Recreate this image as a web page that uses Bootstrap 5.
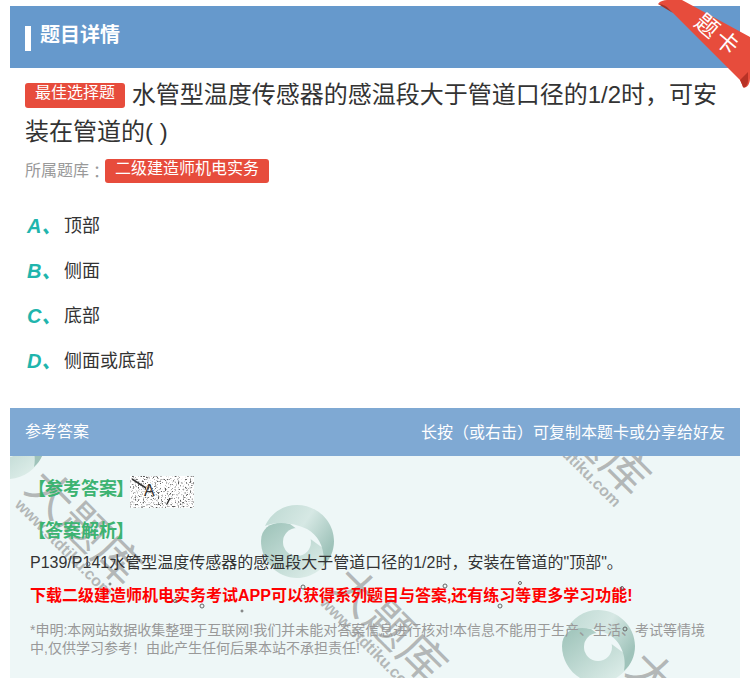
<!DOCTYPE html>
<html lang="zh-CN">
<head>
<meta charset="utf-8">
<link rel="stylesheet" href="https://cdn.jsdelivr.net/npm/bootstrap@5.3.0/dist/css/bootstrap.min.css">
<style>
html,body{height:678px;overflow:hidden;background:#fff}
body{font-family:"Liberation Sans","Noto Sans CJK SC",sans-serif;color:#333;padding:6px 10px 0}
.pc{font-family:"Noto Sans CJK TC",sans-serif}
.hd-bar{height:62px;background:#6699cc;color:#fff;padding-left:15px;padding-bottom:4px;font-size:20px;font-weight:700;position:relative}
.hd-tick{width:6px;height:25px;background:#fff;margin-right:9px;margin-top:5px;margin-bottom:-1px}
.hd-bar span{line-height:1}
.ribbon{position:absolute;left:648px;top:-6px;width:92px;height:100px}
.ribbon-txt{position:absolute;left:20px;top:24px;width:80px;text-align:center;transform:rotate(40deg);color:#fff;font-size:23px;line-height:22px;letter-spacing:3px;font-weight:400;white-space:nowrap}
.q-wrap{padding:6px 15px 0}
.q-text{font-size:24px;line-height:37px;margin:0;color:#333}
.tag-red{display:inline-block;background:#e74c3c;color:#fff;font-size:16px;line-height:20px;height:25px;padding:0 10px;border-radius:3px;vertical-align:5px;margin-top:-6px;font-weight:400}
.q-src{font-size:16px;line-height:24px;color:#999;margin-top:9px;display:flex;align-items:center}
.q-src .tag-red{height:24px;vertical-align:0;margin-top:0}
.opts{padding:21px 0 0;margin:0;list-style:none}
.opts li{height:45px;display:flex;align-items:center;font-size:18px;color:#333}
.opt-key{width:39px;font-size:20px;font-weight:700;font-style:italic;color:#1fb5ad;white-space:nowrap;margin-top:-2px;padding-left:2px}
.ans-top{margin-top:24px;height:48px;background:#7fa9d3;color:#fff;font-size:16px;padding:0 15px}
.ans-body{height:222px;background:#eef7f7;position:relative;overflow:hidden;padding:20px 20px 0;font-size:16px}
.ans-inner{position:relative}
.lbl-green{color:#3cb371;font-size:18px;font-weight:700;line-height:24px;white-space:nowrap}
.br-l{margin-left:-2px;margin-right:-1px}
.br-r{margin-left:-1px;margin-right:-7px}
.noise{width:64px;height:32px;position:relative;display:inline-block;margin-left:3px;flex:none}
.noise svg{position:absolute;inset:0}
.noise b{position:absolute;left:14px;top:4px;font-weight:400;font-size:16px;line-height:22px;color:#333}
.ans-row{height:32px;display:flex;align-items:center}
.ans-row>span:first-child{margin-bottom:6px;flex:none}
.p-black{margin:6px 0 0;line-height:24px;color:#333}
.p-red{margin:9px 0 0;line-height:24px;color:#f00;font-weight:700}
.p-note{margin:14px 0 0;font-size:14px;line-height:17px;color:#999}
.wm{position:absolute;width:220px;text-align:center;color:rgba(120,120,120,.5);transform:translate(-50%,-50%) rotate(45deg);white-space:nowrap}
.wm-big{display:block;font-size:46px;line-height:46px;letter-spacing:1px}
.wm-url{display:block;font-size:16px;line-height:12px;font-weight:700}
.swirl{position:absolute}
.specks{position:absolute;left:0;top:0}
</style>
</head>
<body>
<svg width="0" height="0" class="position-absolute">
<defs>
<linearGradient id="sg1" x1="0" y1="0" x2="1" y2="0.6"><stop offset="0" stop-color="#bcd8d1"/><stop offset=".55" stop-color="#d6e8e4"/><stop offset="1" stop-color="#9fc3ba"/></linearGradient>
<linearGradient id="sg2" x1="0" y1="0" x2="1" y2="1"><stop offset="0" stop-color="#9cc2b8"/><stop offset="1" stop-color="#e6f3f0"/></linearGradient>
<filter id="nz" x="0" y="0" width="100%" height="100%"><feTurbulence type="fractalNoise" baseFrequency=".6" numOctaves="2" seed="7"/><feColorMatrix values="0 0 0 0 .1 0 0 0 0 .1 0 0 0 0 .1 3.2 3.2 0 0 -3.35"/></filter>
<symbol id="swirl" viewBox="0 0 74 74">
<path d="M1 37C1 57 17 74 37 74C52 74 66 64 71 50L30 20C15 16 1 22 1 37Z" fill="url(#sg2)"/>
<path d="M5 22C11 9 23 1 37 1C57 1 74 17 74 37C74 47 70 56 63 62C66 48 60 32 47 25C33 18 16 17 5 22Z" fill="url(#sg1)"/>
<circle cx="37" cy="38" r="14" fill="#eef7f7"/>
</symbol>
</defs>
</svg>
<header class="hd-bar d-flex align-items-center">
<i class="hd-tick"></i><span>题目详情</span>
<div class="ribbon">
<svg width="92" height="100" viewBox="0 0 92 100"><path d="M0 4C2 1 6 0 9 0L24 0L92 37V78C92 85 88 89 85 87C84 84 83 82 82 80L9 7Z" fill="#e74c3c"/><path d="M0 4L15 13L9 7C6 5 3 4 0 4Z" fill="#a83226"/><path d="M82 80L90 72V80C90 85 87 89 85 87C84 84 83 82 82 80Z" fill="#b83226"/></svg>
<div class="ribbon-txt">题卡</div>
</div>
</header>
<section class="q-wrap">
<p class="q-text"><span class="tag-red">最佳选择题</span> 水管型温度传感器的感温段大于管道口径的1/2时<span class="pc">，</span>可安装在管道的( )</p>
<div class="q-src">所属题库<span class="pc">：</span><span class="tag-red">二级建造师机电实务</span></div>
<ul class="opts">
<li><span class="opt-key">A、</span>顶部</li>
<li><span class="opt-key">B、</span>侧面</li>
<li><span class="opt-key">C、</span>底部</li>
<li><span class="opt-key">D、</span>侧面或底部</li>
</ul>
</section>
<div class="ans-top d-flex justify-content-between align-items-center"><span>参考答案</span><span>长按<span class="pc">（</span>或右击<span class="pc">）</span>可复制本题卡或分享给好友</span></div>
<section class="ans-body">
<svg class="swirl" style="left:-39px;top:-51px" width="74" height="74"><use href="#swirl"/></svg>
<svg class="swirl" style="left:250px;top:48px" width="74" height="74"><use href="#swirl"/></svg>
<svg class="swirl" style="left:551px;top:153px" width="74" height="74"><use href="#swirl"/></svg>
<div class="wm" style="left:70px;top:76px"><span class="wm-big">大题库</span><span class="wm-url">www.stdtiku.com</span></div>
<div class="wm" style="left:375px;top:174px"><span class="wm-big">大题库</span><span class="wm-url">www.stdtiku.com</span></div>
<div class="wm" style="left:578px;top:-14px"><span class="wm-big">大题库</span><span class="wm-url">www.stdtiku.com</span></div>
<div class="wm" style="left:671px;top:258px"><span class="wm-big">大题库</span><span class="wm-url">www.stdtiku.com</span></div>
<div class="ans-inner">
<div class="ans-row lbl-green"><span><span class="br-l">【</span>参考答案<span class="br-r">】</span></span><span class="noise"><svg width="64" height="32"><rect width="64" height="32" fill="#fff"/><rect width="64" height="32" filter="url(#nz)"/><path d="M2 3L16 12M40 22L37 28" stroke="#333" stroke-width="1.5"/></svg><b>A</b></span></div>
<div class="lbl-green" style="margin-top:11px"><span class="br-l">【</span>答案解析<span class="br-r">】</span></div>
<p class="p-black">P139/P141水管型温度传感器的感温段大于管道口径的1/2时<span class="pc">，</span>安装在管道的"顶部"。</p>
<p class="p-red">下载二级建造师机电实务考试APP可以获得系列题目与答案,还有练习等更多学习功能!</p>
<p class="p-note">*申明:本网站数据收集整理于互联网!我们并未能对答案信息进行核对!本信息不能用于生产、生活、考试等情境中,仅供学习参考<span class="pc">！</span>由此产生任何后果本站不承担责任!</p>
</div>
<svg class="specks" width="730" height="222" fill="none" stroke="#666" stroke-width="1"><circle cx="78" cy="108" r="2"/><circle cx="165" cy="145" r="1.5"/><circle cx="192" cy="150" r="2"/><circle cx="293" cy="131" r="2"/><circle cx="100" cy="128" r="1"/><circle cx="232" cy="155" r="1"/><circle cx="435" cy="130" r="2"/><circle cx="510" cy="127" r="1.5"/><circle cx="490" cy="150" r="2"/><circle cx="612" cy="132" r="1.5"/><circle cx="615" cy="173" r="2"/></svg>
</section>
<script src="https://cdn.jsdelivr.net/npm/bootstrap@5.3.0/dist/js/bootstrap.bundle.min.js"></script>
</body>
</html>
